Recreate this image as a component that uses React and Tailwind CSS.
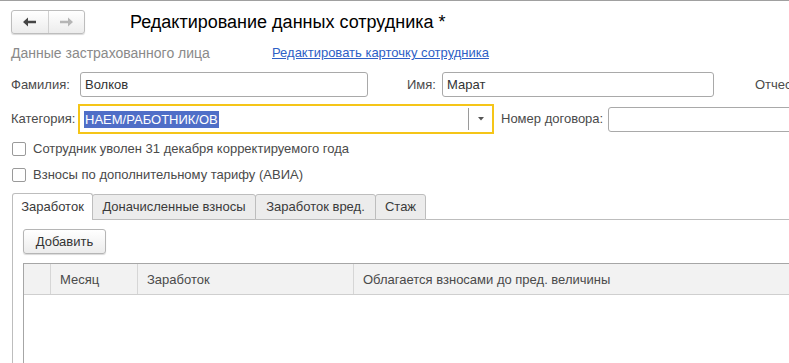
import React from 'react';

// Nav arrows (back active, forward disabled)
function NavButtons() {
  return (
    <div className="flex h-[24px] w-[74px] rounded-[3px] border border-[#bdbdbd] bg-gradient-to-b from-[#ffffff] to-[#ececec] shadow-[0_1px_1px_rgba(0,0,0,0.15)]">
      <button className="flex flex-1 items-center justify-center border-r border-[#d0d0d0]">
        <svg width="14" height="10" viewBox="0 0 14 10"><path d="M0 5 L5 0.5 L5 3.8 L13 3.8 L13 6.2 L5 6.2 L5 9.5 Z" fill="#444" /></svg>
      </button>
      <button className="flex flex-1 items-center justify-center">
        <svg width="14" height="10" viewBox="0 0 14 10"><path d="M14 5 L9 0.5 L9 3.8 L1 3.8 L1 6.2 L9 6.2 L9 9.5 Z" fill="#b5b5b5" /></svg>
      </button>
    </div>
  );
}

function TextInput({ value, className }) {
  return (
    <div className={`flex h-[25px] shrink-0 items-center rounded-[3px] border border-[#a9a9a9] px-[4px] text-[13px] text-[#333] ${className}`}>
      {value}
    </div>
  );
}

function Checkbox({ label }) {
  return (
    <div className="flex h-[26px] items-center gap-[7px] pl-[12px]">
      <div className="h-[14px] w-[14px] rounded-[2px] border border-[#9a9a9a] bg-white" />
      <span className="text-[13px] text-[#4a4a4a]">{label}</span>
    </div>
  );
}

export default function App() {
  const tabs = [
    { label: 'Заработок', w: 'w-[81px]', active: true },
    { label: 'Доначисленные взносы', w: 'w-[164px]' },
    { label: 'Заработок вред.', w: 'w-[121px]' },
    { label: 'Стаж', w: 'w-[51px]' },
  ];
  return (
    <div className="h-[363px] w-[789px] overflow-hidden border-t border-[#a0a0a0] bg-white font-['Liberation_Sans',Arial,sans-serif]">
      {/* Header */}
      <div className="flex h-[33px] items-end pl-[11px]">
        <NavButtons />
        <h1 className="ml-[45px] pb-[3px] text-[18px] leading-none text-black">Редактирование данных сотрудника *</h1>
      </div>

      <div className="mt-[10px] flex h-[18px] items-center pl-[11px]">
        <span className="w-[261px] text-[14px] text-[#8a8a8a]">Данные застрахованного лица</span>
        <a className="text-[13px] text-[#2e5fc6] underline">Редактировать карточку сотрудника</a>
      </div>

      {/* Name row */}
      <div className="mt-[10px] flex items-center pl-[11px] text-[13px] text-[#4a4a4a]">
        <span className="w-[69px] shrink-0">Фамилия:</span>
        <TextInput value="Волков" className="w-[288px]" />
        <span className="ml-[39px] w-[35px] shrink-0">Имя:</span>
        <TextInput value="Марат" className="w-[272px]" />
        <span className="ml-[41px] shrink-0 whitespace-nowrap">Отчество:</span>
      </div>

      {/* Category row */}
      <div className="mt-[7px] flex items-center pl-[11px] text-[13px] text-[#4a4a4a]">
        <span className="w-[67px] shrink-0">Категория:</span>
        <div className="flex h-[30px] w-[416px] shrink-0 items-center border-2 border-[#f5c518] pl-[4px]">
          <span className="bg-[#4f6ec7] px-[1px] leading-[17px] text-white">НАЕМ/РАБОТНИК/ОВ</span>
          <div className="ml-auto h-[22px] w-px bg-[#9a9a9a]" />
          <div className="flex w-[23px] items-center justify-center">
            <svg width="6" height="4" viewBox="0 0 6 4"><path d="M0 0 L6 0 L3 3.5 Z" fill="#555" /></svg>
          </div>
        </div>
        <span className="ml-[7px] w-[107px] shrink-0 whitespace-nowrap">Номер договора:</span>
        <div className="h-[25px] w-[200px] shrink-0 rounded-[3px] border border-[#a9a9a9]" />
      </div>

      {/* Checkboxes */}
      <div className="mt-[2px]">
        <Checkbox label="Сотрудник уволен 31 декабря корректируемого года" />
        <Checkbox label="Взносы по дополнительному тарифу (АВИА)" />
      </div>

      {/* Tabs */}
      <div className="mt-[5px] flex h-[27px] items-end pl-[12px]">
        {tabs.map((t) => (
          <div
            key={t.label}
            className={`flex shrink-0 items-center justify-center border border-[#bdbdbd] text-[13px] text-[#3a3a3a] ${t.w} ${t.active ? 'h-[27px] rounded-t-[3px] border-b-0 bg-white' : 'h-[26px] -ml-px rounded-t-[3px] bg-[#ececec]'}`}
          >
            {t.label}
          </div>
        ))}
        <div className="h-px flex-1 bg-[#bdbdbd]" />
      </div>

      {/* Tab panel */}
      <div className="ml-[12px] h-[200px] border-l border-[#bdbdbd] pl-[10px] pt-[9px]">
        <button className="h-[25px] w-[83px] rounded-[3px] border border-[#b5b5b5] bg-gradient-to-b from-[#ffffff] to-[#ececec] text-[13px] text-[#333] shadow-[0_1px_1px_rgba(0,0,0,0.15)]">
          Добавить
        </button>
        <div className="mt-[9px] h-[120px] border-l border-t border-[#a6a6a6]">
          <div className="flex h-[31px] border-b border-[#cfcfcf] bg-[#f2f2f2] text-[13px] text-[#4a4a4a]">
            <div className="w-[27px] border-r border-[#d6d6d6]" />
            <div className="flex w-[87px] items-center border-r border-[#d6d6d6] pl-[9px]">Месяц</div>
            <div className="flex w-[216px] items-center border-r border-[#d6d6d6] pl-[9px]">Заработок</div>
            <div className="flex flex-1 items-center whitespace-nowrap pl-[9px]">Облагается взносами до пред. величины</div>
          </div>
        </div>
      </div>
    </div>
  );
}
